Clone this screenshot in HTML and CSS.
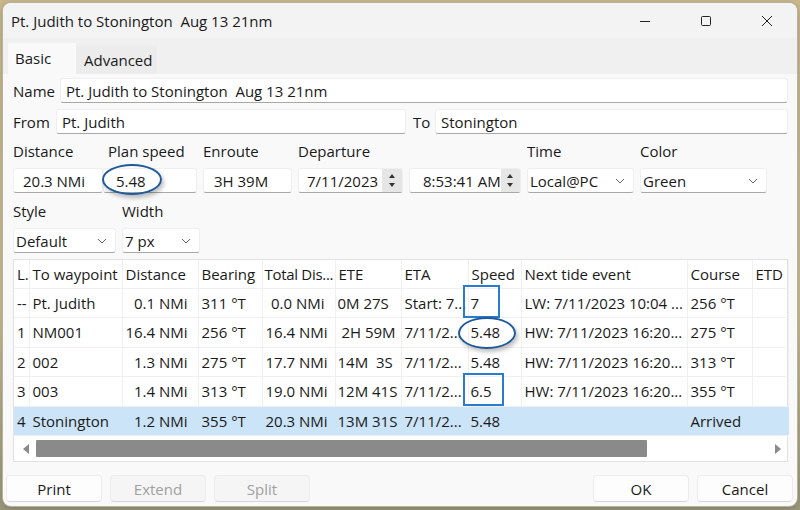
FILE: index.html
```html
<!DOCTYPE html>
<html>
<head>
<meta charset="utf-8">
<link rel="stylesheet" href="styles.css">
</head>
<body>
<div class="window">
  <div class="titlebar">
    <div class="title">Pt. Judith to Stonington&nbsp; Aug 13 21nm</div>
    <div class="controls">
      <svg class="ctl" width="12" height="12" viewBox="0 0 12 12"><path d="M1 6.5h10" stroke="#222" stroke-width="1"/></svg>
      <svg class="ctl" width="12" height="12" viewBox="0 0 12 12"><rect x="1.5" y="1.5" width="9" height="9" rx="1" fill="none" stroke="#222" stroke-width="1"/></svg>
      <svg class="ctl" width="12" height="12" viewBox="0 0 12 12"><path d="M1 1l10 10M11 1L1 11" stroke="#222" stroke-width="1"/></svg>
    </div>
  </div>
  <div class="tabs">
    <div class="tab active">Basic</div>
    <div class="tab">Advanced</div>
  </div>
  <div class="panel">
    <div class="row r-name">
      <span class="lbl">Name</span>
      <div class="input grow">Pt. Judith to Stonington&nbsp; Aug 13 21nm</div>
    </div>
    <div class="row r-from">
      <span class="lbl">From</span>
      <div class="input from">Pt. Judith</div>
      <span class="lbl to">To</span>
      <div class="input grow">Stonington</div>
    </div>
    <div class="fields">
      <div class="fld f-dist"><span class="lbl">Distance</span><div class="input">20.3 NMi</div></div>
      <div class="fld f-speed"><span class="lbl">Plan speed</span><div class="input">5.48</div><div class="ellipse"></div></div>
      <div class="fld f-enr"><span class="lbl">Enroute</span><div class="input">3H 39M</div></div>
      <div class="fld f-dep"><span class="lbl">Departure</span>
        <div class="input spin"><span>7/11/2023</span><div class="spinbtn"><i class="up"></i><i class="down"></i></div></div>
      </div>
      <div class="fld f-time"><span class="lbl">&nbsp;</span>
        <div class="input spin"><span>8:53:41 AM</span><div class="spinbtn"><i class="up"></i><i class="down"></i></div></div>
      </div>
      <div class="fld f-tz"><span class="lbl">Time</span><div class="input combo"><span>Local@PC</span><svg width="10" height="6" viewBox="0 0 10 6"><path d="M1 1l4 4 4-4" fill="none" stroke="#666" stroke-width="1"/></svg></div></div>
      <div class="fld f-col"><span class="lbl">Color</span><div class="input combo"><span>Green</span><svg width="10" height="6" viewBox="0 0 10 6"><path d="M1 1l4 4 4-4" fill="none" stroke="#666" stroke-width="1"/></svg></div></div>
    </div>
    <div class="fields second">
      <div class="fld f-style"><span class="lbl">Style</span><div class="input combo"><span>Default</span><svg width="10" height="6" viewBox="0 0 10 6"><path d="M1 1l4 4 4-4" fill="none" stroke="#666" stroke-width="1"/></svg></div></div>
      <div class="fld f-width"><span class="lbl">Width</span><div class="input combo"><span>7 px</span><svg width="10" height="6" viewBox="0 0 10 6"><path d="M1 1l4 4 4-4" fill="none" stroke="#666" stroke-width="1"/></svg></div></div>
    </div>
    <div class="grid">
      <table>
        <colgroup>
          <col style="width:15px"><col style="width:93px"><col style="width:76px"><col style="width:64px"><col style="width:73px"><col style="width:66px"><col style="width:67px"><col style="width:53px"><col style="width:166px"><col style="width:65px"><col style="width:36px">
        </colgroup>
        <thead>
          <tr><th>L.</th><th>To waypoint</th><th>Distance</th><th>Bearing</th><th class="tight">Total Dis...</th><th>ETE</th><th>ETA</th><th>Speed</th><th>Next tide event</th><th>Course</th><th>ETD</th></tr>
        </thead>
        <tbody>
          <tr><td>--</td><td>Pt. Judith</td><td class="r">0.1 NMi</td><td>311 °T</td><td class="r">0.0 NMi</td><td class="c">0M 27S</td><td>Start: 7...</td><td class="sp"><span class="box b7">7</span></td><td>LW: 7/11/2023 10:04 ...</td><td>256 °T</td><td></td></tr>
          <tr><td>1</td><td>NM001</td><td class="r">16.4 NMi</td><td>256 °T</td><td class="r">16.4 NMi</td><td class="c">&nbsp;2H 59M</td><td>7/11/2...</td><td class="sp"><span class="oval">5.48</span></td><td>HW: 7/11/2023 16:20...</td><td>275 °T</td><td></td></tr>
          <tr><td>2</td><td>002</td><td class="r">1.3 NMi</td><td>275 °T</td><td class="r">17.7 NMi</td><td class="c">14M&nbsp; 3S</td><td>7/11/2...</td><td class="sp">5.48</td><td>HW: 7/11/2023 16:20...</td><td>313 °T</td><td></td></tr>
          <tr><td>3</td><td>003</td><td class="r">1.4 NMi</td><td>313 °T</td><td class="r">19.0 NMi</td><td class="c">12M 41S</td><td>7/11/2...</td><td class="sp"><span class="box b65">6.5</span></td><td>HW: 7/11/2023 16:20...</td><td>355 °T</td><td></td></tr>
          <tr class="sel"><td>4</td><td>Stonington</td><td class="r">1.2 NMi</td><td>355 °T</td><td class="r">20.3 NMi</td><td class="c">13M 31S</td><td>7/11/2...</td><td class="sp">5.48</td><td></td><td>Arrived</td><td></td></tr>
        </tbody>
      </table>
      <div class="hscroll">
        <svg width="8" height="10" viewBox="0 0 8 10"><path d="M7 0v10L1 5z" fill="#8a8a8a"/></svg>
        <div class="track"><div class="thumb"></div></div>
        <svg width="8" height="10" viewBox="0 0 8 10"><path d="M1 0v10l6-5z" fill="#8a8a8a"/></svg>
      </div>
    </div>
    <div class="buttons">
      <div class="btn">Print</div>
      <div class="btn disabled">Extend</div>
      <div class="btn disabled">Split</div>
      <div class="spacer"></div>
      <div class="btn">OK</div>
      <div class="btn">Cancel</div>
    </div>
  </div>
</div>
</body>
</html>
```
FILE: styles.css
```css
* { box-sizing: border-box; }
html, body { margin: 0; padding: 0; }
body {
  width: 800px; height: 510px; overflow: hidden;
  background: linear-gradient(180deg, #c9b98c 0%, #cdbf94 60%, #9c9a7c 100%);
  font-family: "Segoe UI", "Open Sans", "Noto Sans", sans-serif;
  font-size: 15px;
  color: #1a1a1a;
  padding: 3px 3px 0 3px;
}
.window {
  width: 794px; height: 503px;
  background: #f9f9f9;
  border-radius: 8px;
  overflow: hidden;
  box-shadow: 0 0 0 1px #b8b1a0, 0 2px 8px rgba(0,0,0,0.25);
  display: flex; flex-direction: column;
}
.titlebar {
  height: 35px; flex: none;
  background: #f3f3f3;
  display: flex; align-items: center;
  padding-left: 8px;
}
.title { flex: 1; font-size: 15px; }
.controls { display: flex; align-items: center; }
.ctl { margin: 0 0 0 49px; }
.controls .ctl:first-child { margin-left: 0; }
.controls .ctl:last-child { margin-right: 24px; }
.tabs {
  height: 36px; flex: none;
  background: #f0f0f0;
  display: flex; align-items: flex-end;
  padding-left: 5px;
}
.tab {
  height: 28px; padding: 0 0 0 8px; width: 81px;
  display: flex; align-items: center;
  background: #ececec;
}
.tab.active {
  height: 31px; width: 68px; background: #f9f9f9;
  padding-left: 7px; align-items: flex-start; padding-top: 5px;
}
.panel { flex: 1; display: flex; flex-direction: column; padding: 4px 9px 0 10px; }
.row { display: flex; align-items: center; height: 25px; }
.r-from { margin-top: 6px; }
.lbl { white-space: nowrap; }
.r-name .lbl { width: 47px; }
.r-from .lbl { width: 43px; }
.r-from .lbl.to { width: 22px; margin-left: 7px; }
.input {
  height: 25px; background: #fff;
  border: 1px solid #efefef; border-bottom-color: #a8a8a8;
  border-radius: 3px;
  display: flex; align-items: center;
  padding: 0 5px; white-space: nowrap; overflow: hidden;
}
.grow { flex: 1; }
.from { width: 350px; }
.fields { display: flex; margin-top: 8px; }
.fld { display: flex; flex-direction: column; position: relative; }
.fld .lbl { height: 26px; line-height: 18px; }
.fields.second { margin-top: 9px; }
.f-dist { width: 90px; }
.f-dist .input { padding-left: 9px; }
.f-speed { width: 100px; }
.f-speed .lbl { padding-left: 5px; }
.f-speed .input { width: 94px; padding-left: 12px; }
.f-enr { width: 95px; }
.f-enr .input { width: 89px; padding-left: 10px; }
.f-dep { width: 111px; }
.f-dep .input { width: 105px; }
.f-time { width: 118px; }
.f-time .input { width: 112px; padding-left: 10px; }
.f-tz { width: 113px; }
.f-tz .input { width: 107px; }
.f-col { width: 128px; }
.f-col .input { width: 127px; }
.spin { padding-right: 0; justify-content: space-between; }
.spin span { padding-left: 3px; }
.spinbtn {
  width: 20px; height: 23px; background: #e6e6e6;
  display: flex; flex-direction: column; align-items: center; justify-content: center; gap: 5px;
}
.spinbtn i { width: 0; height: 0; border-left: 3px solid transparent; border-right: 3px solid transparent; }
.spinbtn i.up { border-bottom: 4px solid #333; }
.spinbtn i.down { border-top: 4px solid #333; }
.combo { justify-content: space-between; padding: 0 8px 0 2px; }
.f-style { width: 109px; }
.f-style .input { width: 103px; }
.f-width { width: 80px; }
.f-width .input { width: 78px; }
.ellipse {
  position: absolute; left: -1px; top: 22px; width: 60px; height: 31px;
  border: 2px solid #1f5a9a; border-radius: 50%;
  box-shadow: 2px 3px 4px rgba(0,0,0,0.25);
}
.grid {
  margin-top: 6px;
  width: 775px; height: 203px;
  background: #fff; border: 1px solid #e2e2e2;
  display: flex; flex-direction: column;
}
table { border-collapse: collapse; table-layout: fixed; width: 774px; }
th, td {
  font-weight: normal; text-align: left; white-space: nowrap; overflow: hidden;
  padding: 0 0 0 3px; border-right: 1px solid #f0f0f0; border-bottom: 1px solid #f0f0f0;
  position: relative;
}
th.tight { letter-spacing: -0.3px; padding-left: 2px; }
th { height: 28px; }
td { height: 29.5px; }
td.r { text-align: right; padding-right: 10px; }
td.c { padding-left: 2px; }
tr.sel td { background: #cce4f7; border-right-color: #cce4f7; }
td.sp { overflow: visible; padding-left: 2px; }
.box { position: relative; display: inline-block; }
.box::after {
  content: ""; position: absolute; left: -8px; top: -8px; bottom: -5px;
  border: 2px solid #2a7ad0;
}
.b7::after { width: 33px; }
.b65::after { width: 37px; }
.oval { position: relative; display: inline-block; }
.oval::after {
  content: ""; position: absolute; left: -13px; top: -5px; width: 54px; height: 28px;
  border: 2px solid #1f5a9a; border-radius: 50%;
  box-shadow: 2px 3px 4px rgba(0,0,0,0.25);
}
.hscroll {
  margin-top: auto; height: 27px; display: flex; align-items: center; padding: 0 5px 0 8px; gap: 6px;
}
.track { flex: 1; height: 17px; }
.thumb { width: 611px; height: 17px; background: #8a8a8a; border-radius: 1px; }
.buttons { display: flex; margin-top: 13px; margin-left: -7px; margin-right: -5px; gap: 8px; }
.btn {
  width: 96px; height: 27px; background: #fdfdfd;
  border: 1px solid #ececec; border-bottom-color: #d6d6d6; border-radius: 4px;
  display: flex; align-items: center; justify-content: center;
}
.btn.disabled { color: #a0a0a0; background: #f5f5f5; }
.spacer { flex: 1; }
```
